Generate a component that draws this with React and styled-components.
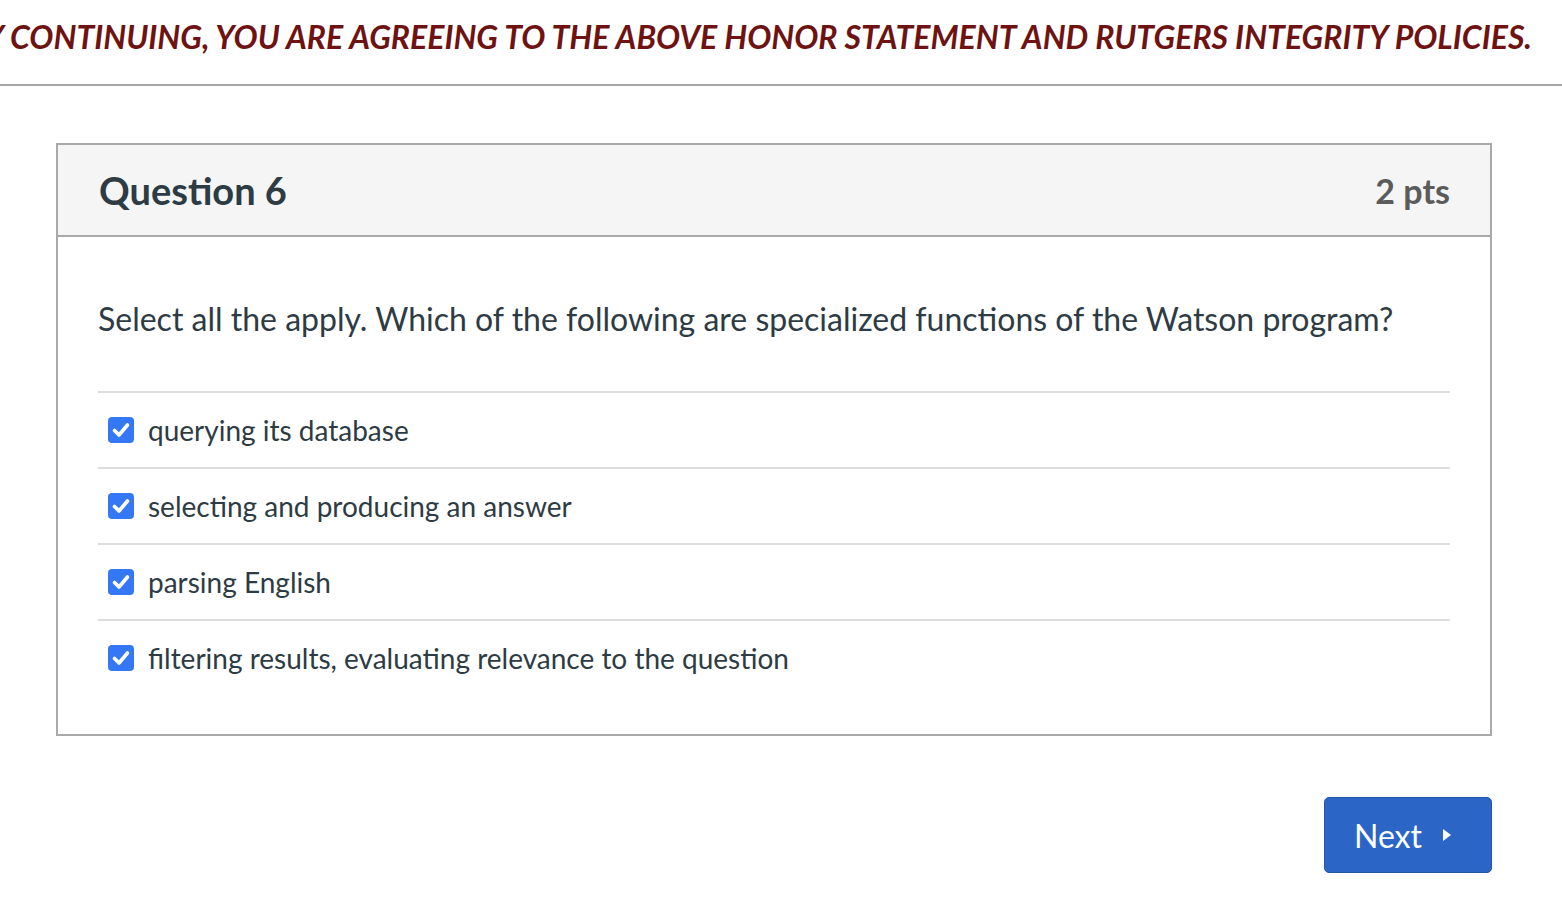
import React from "react";
import styled, { createGlobalStyle } from "styled-components";

const GlobalStyle = createGlobalStyle`
  html, body {
    margin: 0;
    padding: 0;
    background: #ffffff;
    font-family: Lato, "Noto Sans", sans-serif;
  }
`;

const Banner = styled.div`
  height: 84px;
  border-bottom: 2px solid #a5a5a5;
  display: flex;
  justify-content: flex-end;
  align-items: center;
  overflow: hidden;
  padding-right: 30px;
`;

const BannerText = styled.div`
  white-space: nowrap;
  flex-shrink: 0;
  font-size: 32px;
  font-weight: 700;
  font-style: italic;
  color: #6e1212;
  margin-top: -12px;
`;

const Main = styled.main`
  padding: 57px 70px 40px 56px;
`;

const Card = styled.section`
  border: 2px solid #a9a9a9;
`;

const CardHeader = styled.header`
  height: 90px;
  background: #f5f5f5;
  border-bottom: 2px solid #a9a9a9;
  display: flex;
  align-items: center;
  justify-content: space-between;
  padding: 0 40px 0 41px;
`;

const Title = styled.h2`
  margin: 0;
  font-size: 38px;
  font-weight: 700;
  color: #2d3b45;
`;

const Points = styled.span`
  font-size: 34px;
  font-weight: 700;
  color: #5b5b5b;
`;

const CardBody = styled.div`
  padding: 59px 40px 39px 40px;
`;

const QuestionText = styled.p`
  margin: 0 0 50px;
  font-size: 32px;
  line-height: 45px;
  color: #2d3b45;
`;

const Answers = styled.ul`
  list-style: none;
  margin: 0;
  padding: 0;
`;

const Answer = styled.li`
  height: 74px;
  border-top: 2px solid #dddddd;
  display: flex;
  align-items: center;
  padding-left: 10px;
  gap: 14px;
  font-size: 28px;
  color: #2d3b45;
`;

const Box = styled.span`
  width: 26px;
  height: 26px;
  border-radius: 4px;
  background: #3478f6;
  display: flex;
  align-items: center;
  justify-content: center;
  flex-shrink: 0;
`;

const Footer = styled.div`
  display: flex;
  justify-content: flex-end;
  margin-top: 61px;
`;

const NextButton = styled.button`
  width: 168px;
  height: 76px;
  background: #2b66c7;
  border: 1px solid #2455a8;
  border-radius: 5px;
  color: #ffffff;
  font-family: Lato, "Noto Sans", sans-serif;
  font-size: 32px;
  display: flex;
  align-items: center;
  justify-content: center;
  gap: 20px;
  padding: 0 10px 0 0;
  cursor: pointer;
`;

const Check = () => (
  <Box>
    <svg width="22" height="22" viewBox="0 0 22 22">
      <path
        d="M4.5 11.5 L9 16 L17.5 6"
        fill="none"
        stroke="#ffffff"
        strokeWidth="3.6"
        strokeLinecap="round"
        strokeLinejoin="round"
      />
    </svg>
  </Box>
);

const answers = [
  "querying its database",
  "selecting and producing an answer",
  "parsing English",
  "filtering results, evaluating relevance to the question",
];

export default function App() {
  return (
    <>
      <GlobalStyle />
      <Banner>
        <BannerText>
          BY CONTINUING, YOU ARE AGREEING TO THE ABOVE HONOR STATEMENT AND RUTGERS INTEGRITY POLICIES.
        </BannerText>
      </Banner>
      <Main>
        <Card>
          <CardHeader>
            <Title>Question 6</Title>
            <Points>2 pts</Points>
          </CardHeader>
          <CardBody>
            <QuestionText>
              Select all the apply. Which of the following are specialized functions of the Watson program?
            </QuestionText>
            <Answers>
              {answers.map((a) => (
                <Answer key={a}>
                  <Check />
                  {a}
                </Answer>
              ))}
            </Answers>
          </CardBody>
        </Card>
        <Footer>
          <NextButton>
            Next
            <svg width="10" height="14" viewBox="0 0 10 14">
              <path d="M1 1 L9 7 L1 13 Z" fill="#ffffff" />
            </svg>
          </NextButton>
        </Footer>
      </Main>
    </>
  );
}
